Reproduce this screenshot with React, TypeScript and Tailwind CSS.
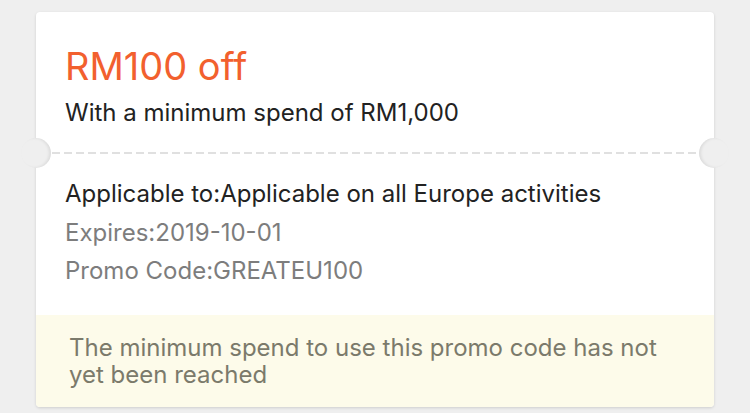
import React from "react";

const font = { fontFamily: "Inter, 'Noto Sans', sans-serif" };

function Notch({ side }: { side: "left" | "right" }) {
  return (
    <div
      className={
        side === "left"
          ? "absolute left-[-15px] top-[-14px] w-[30px] h-[30px] rounded-full bg-[#efefef] shadow-[inset_-2px_0_3px_rgba(0,0,0,0.08)]"
          : "absolute right-[-15px] top-[-14px] w-[30px] h-[30px] rounded-full bg-[#efefef] shadow-[inset_2px_0_3px_rgba(0,0,0,0.08)]"
      }
    />
  );
}

export default function App() {
  return (
    <div className="h-[413px] w-[750px] bg-[#efefef] pt-[12px] pl-[36px] overflow-hidden" style={font}>
      <div className="w-[678px] bg-white rounded-[4px] shadow-[0_1px_3px_rgba(0,0,0,0.14)]">
        <div className="px-[29px] pt-[32px] pb-[25px]">
          <h1 className="text-[38px] leading-[44px] text-[#f2602e]">RM100 off</h1>
          <p className="mt-[11px] text-[24px] leading-[28px] text-[#222222]">With a minimum spend of RM1,000</p>
        </div>

        <div className="relative h-[2px]">
          <div className="mx-[16px] h-[2px] bg-[repeating-linear-gradient(to_right,#e0e0e0_0,#e0e0e0_8px,transparent_8px,transparent_12px)]" />
          <Notch side="left" />
          <Notch side="right" />
        </div>

        <div className="px-[29px] pt-[22px] pb-[26px] text-[24px] leading-[36px]">
          <p className="text-[#222222]">Applicable to:Applicable on all Europe activities</p>
          <p className="mt-[3px] text-[#7d7d7d]">Expires:2019-10-01</p>
          <p className="mt-[2px] text-[#7d7d7d]">Promo Code:GREATEU100</p>
        </div>

        <div className="bg-[#fdfbea] rounded-b-[4px] pl-[33px] pr-[30px] pt-[19px] pb-[19px]">
          <p className="text-[24px] leading-[27px] text-[#7b7a6b]">
            The minimum spend to use this promo code has not
            <br />
            yet been reached
          </p>
        </div>
      </div>
    </div>
  );
}
